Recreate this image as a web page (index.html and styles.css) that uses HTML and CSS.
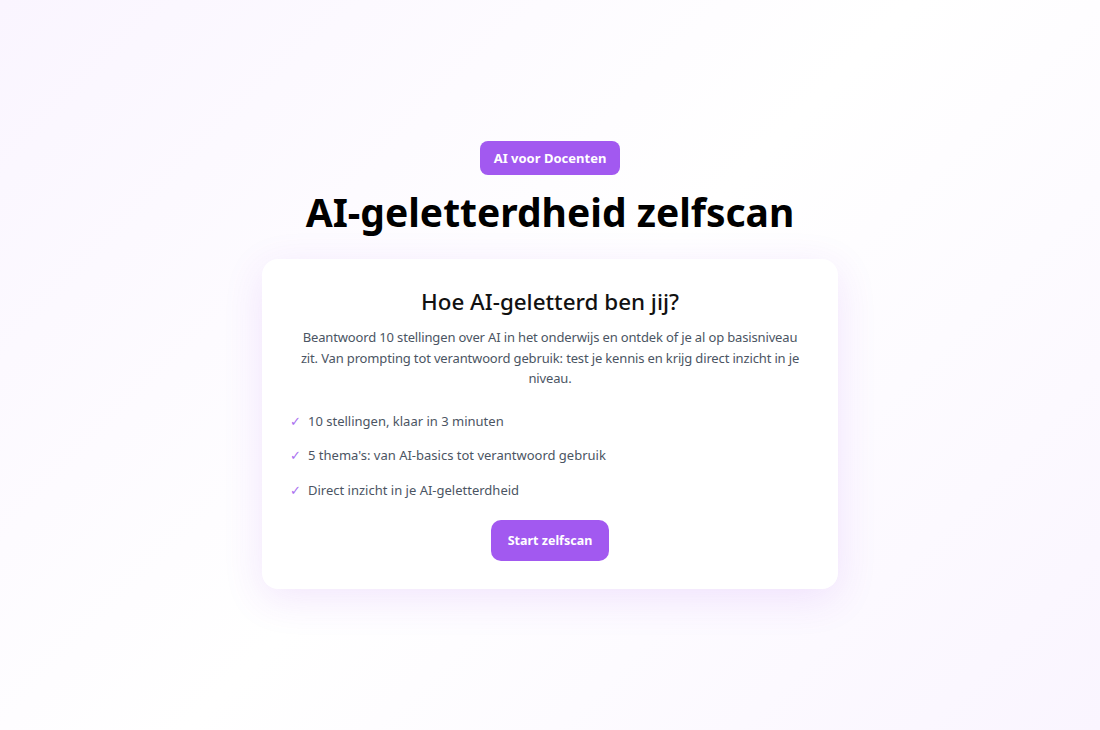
FILE: index.html
```html
<!DOCTYPE html>
<html lang="nl">
<head>
<meta charset="utf-8">
<title>AI-geletterdheid zelfscan</title>
<link rel="stylesheet" href="styles.css">
</head>
<body>
<main class="page">
  <span class="badge">AI voor Docenten</span>
  <h1 class="title">AI-geletterdheid zelfscan</h1>
  <section class="card">
    <h2 class="card-title">Hoe AI-geletterd ben jij?</h2>
    <p class="intro">Beantwoord 10 stellingen over AI in het onderwijs en ontdek of je al op basisniveau zit. Van prompting tot verantwoord gebruik: test je kennis en krijg direct inzicht in je niveau.</p>
    <ul class="features">
      <li><span class="check">✓</span>10 stellingen, klaar in 3 minuten</li>
      <li><span class="check">✓</span>5 thema's: van AI-basics tot verantwoord gebruik</li>
      <li><span class="check">✓</span>Direct inzicht in je AI-geletterdheid</li>
    </ul>
    <button class="start">Start zelfscan</button>
  </section>
</main>
</body>
</html>
```
FILE: styles.css
```css
* { box-sizing: border-box; }
html, body { margin: 0; height: 100%; }
body {
  font-family: "Noto Sans", "Open Sans", sans-serif;
  background: linear-gradient(135deg, #faf5ff 0%, #ffffff 50%, #faf5ff 100%);
  color: #111;
}
.page {
  min-height: 730px;
  display: flex;
  flex-direction: column;
  align-items: center;
  padding-top: 141px;
}
.badge {
  background: #a259f0;
  color: #fff;
  font-size: 13px;
  font-weight: 700;
  padding: 0 14px;
  height: 34px;
  line-height: 34px;
  border-radius: 8px;
}
.title {
  margin: 12px 0 22px;
  font-size: 39px;
  font-weight: 700;
  line-height: 50px;
  color: #000;
}
.card {
  width: 576px;
  background: #fff;
  border-radius: 16px;
  box-shadow: 0 10px 40px rgba(147, 51, 234, 0.12);
  padding: 28px 28px 28px;
  display: flex;
  flex-direction: column;
  align-items: center;
}
.card-title {
  margin: 0 0 10px;
  font-size: 22.4px;
  font-weight: 500;
  line-height: 30px;
  color: #111;
}
.intro {
  margin: 0 0 22px;
  padding: 0 6px;
  text-align: center;
  font-size: 13px;
  letter-spacing: -0.15px;
  line-height: 20.5px;
  color: #4b5563;
}
.features {
  list-style: none;
  margin: 0 0 20px;
  padding: 0;
  align-self: stretch;
  display: flex;
  flex-direction: column;
  gap: 14px;
}
.features li {
  font-size: 13px;
  line-height: 20.5px;
  color: #4b5563;
  display: flex;
  gap: 7px;
}
.check { color: #a970f0; }
.start {
  background: #a259f0;
  color: #fff;
  border: 0;
  font-family: inherit;
  font-size: 12.5px;
  font-weight: 700;
  height: 41px;
  padding: 0 17px;
  border-radius: 10px;
}
```
